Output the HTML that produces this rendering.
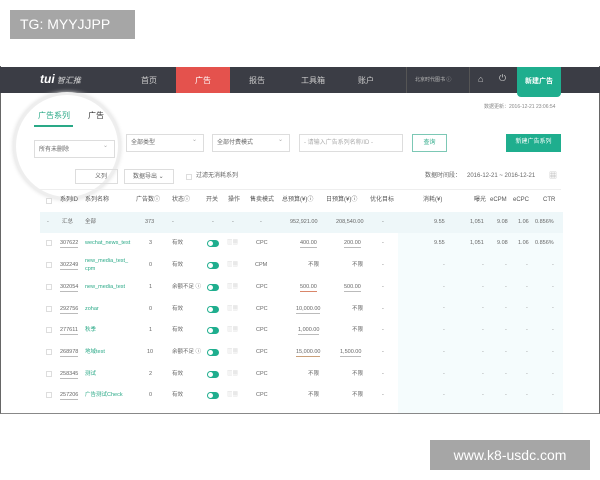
<!DOCTYPE html>
<html><head><meta charset="utf-8"><style>
*{margin:0;padding:0;box-sizing:border-box}
body{width:600px;height:480px;background:#fff;position:relative;overflow:hidden;font-family:"Liberation Sans","Noto Sans CJK SC",sans-serif;color:#555}
.a{position:absolute;white-space:nowrap}
.nav{left:0;top:67px;width:600px;height:26px;background:#3b3d45}
.nt{color:#ccc;font-size:8px;top:76px;line-height:9px}
.sel{border:1px solid #ddd;height:18px;font-size:6px;line-height:7px;color:#666;padding:5px 4px;background:#fff}
.sel:after{content:"⌄";position:absolute;right:6px;top:2px;color:#aaa}
.h{font-size:6px;line-height:7px;color:#555;top:197px}
.r{font-size:5.5px;line-height:7px;color:#666}
.g{color:#2aa987}
.sw{width:12px;height:7px;border-radius:4px;background:#1fae8e}
.sw:after{content:"";position:absolute;left:1px;top:1px;width:5px;height:5px;border-radius:50%;background:#fff}
.cb{width:6px;height:6px;border:1px solid #ddd;background:#fff}
.ul{border-bottom:1px solid #bbb}
.d{font-size:5.5px;color:#888;line-height:21.7px}
</style></head><body>
<div class="a" style="left:10px;top:10px;width:125px;height:29px;background:#a6a6a6;color:#fff;font-size:14px;line-height:16px;padding:6px 0 0 10px">TG: MYYJJPP</div>
<div class="a" style="left:0;top:66px;width:600px;height:348px;border-left:1px solid #666;border-right:1px solid #666;border-bottom:1px solid #888"></div>
<div class="a nav"></div>
<div class="a" style="left:40px;top:72px;color:#fff;font-size:12px;line-height:14px;font-weight:bold;font-style:italic">tui<span style="font-size:8px;font-weight:normal;color:#ddd"> 智汇推</span></div>
<div class="a nt" style="left:141px">首页</div>
<div class="a" style="left:176px;top:67px;width:54px;height:26px;background:#e4524d;color:#fff;font-size:8px;line-height:9px;text-align:center;padding-top:9px">广告</div>
<div class="a nt" style="left:249px">报告</div>
<div class="a nt" style="left:301px">工具箱</div>
<div class="a nt" style="left:358px">账户</div>
<div class="a" style="left:406px;top:67px;width:1px;height:26px;background:#555"></div>
<div class="a" style="left:415px;top:77px;font-size:5px;line-height:6px;color:#bbb">北京时代图书 ⓘ</div>
<div class="a" style="left:469px;top:67px;width:1px;height:26px;background:#555"></div>
<div class="a" style="left:478px;top:74px;color:#ccc;font-size:9px;line-height:10px">⌂</div>
<div class="a" style="left:499px;top:73px;color:#ccc;font-size:9px;line-height:10px">⏻</div>
<div class="a" style="left:517px;top:67px;width:44px;height:30px;background:#1fae8e;border-radius:0 0 4px 4px;color:#fff;font-size:7px;line-height:8px;font-weight:bold;text-align:center;padding-top:11px">新建广告</div>
<div class="a" style="left:484px;top:104px;font-size:5px;line-height:6px;color:#888">数据更新：2016-12-21 23:06:54</div>
<div class="a" style="left:13px;top:92px;width:108px;height:108px;border-radius:50%;border:3px solid #eee;box-shadow:0 0 4px #ddd;background:#fff"></div>
<div class="a g" style="left:38px;top:111px;font-size:8px;line-height:9px">广告系列</div>
<div class="a" style="left:34px;top:125px;width:39px;height:2px;background:#2aa987"></div>
<div class="a" style="left:88px;top:111px;font-size:8px;line-height:9px;color:#333">广告</div>
<div class="a sel" style="left:34px;top:140px;width:81px;padding-top:6px">所有未删除</div>
<div class="a sel" style="left:126px;top:134px;width:78px">全部类型</div>
<div class="a sel" style="left:212px;top:134px;width:78px">全部付费模式</div>
<div class="a" style="left:299px;top:134px;width:104px;height:18px;border:1px solid #ddd;font-size:6px;line-height:7px;color:#aaa;padding:5px 4px">- 请输入广告系列名称/ID -</div>
<div class="a" style="left:412px;top:134px;width:35px;height:18px;border:1px solid #7cc8b5;font-size:6px;line-height:7px;color:#2aa987;text-align:center;padding-top:5px">查询</div>
<div class="a" style="left:506px;top:134px;width:55px;height:18px;background:#1fae8e;font-size:6px;line-height:7px;color:#fff;text-align:center;padding-top:5px">新建广告系列</div>
<div class="a" style="left:75px;top:169px;width:43px;height:15px;border:1px solid #ddd;font-size:6px;line-height:7px;color:#666;padding:4px 0 0 19px">义列</div>
<div class="a" style="left:124px;top:169px;width:50px;height:15px;border:1px solid #ddd;font-size:6px;line-height:7px;color:#666;padding:4px 0 0 8px">数据导出 ⌄</div>
<div class="a cb" style="left:186px;top:174px"></div>
<div class="a" style="left:196px;top:173px;font-size:6px;line-height:7px;color:#666">过滤无消耗系列</div>
<div class="a" style="left:425px;top:173px;font-size:6px;line-height:7px;color:#666">数据时间段：</div>
<div class="a" style="left:467px;top:173px;font-size:6px;line-height:7px;color:#666">2016-12-21 ~ 2016-12-21</div>
<div class="a" style="left:549px;top:171px;font-size:8px;line-height:9px;color:#aaa">▦</div>
<div class="a" style="left:40px;top:189px;width:521px;height:1px;background:#eee"></div>
<div class="a" style="left:398px;top:233px;width:165px;height:180px;background:#f5fcfd"></div>
<div class="a" style="left:40px;top:212px;width:523px;height:21px;background:#eef7f9"></div>
<div class="a cb" style="left:46px;top:198px"></div>
<div class="a h" style="left:60px">系列ID</div><div class="a h" style="left:85px">系列名称</div>
<div class="a h" style="left:136px">广告数ⓘ</div><div class="a h" style="left:172px">状态ⓘ</div>
<div class="a h" style="left:206px">开关</div><div class="a h" style="left:228px">操作</div>
<div class="a h" style="left:250px">售卖模式</div><div class="a h" style="left:282px">总预算(¥)ⓘ</div>
<div class="a h" style="left:326px">日预算(¥)ⓘ</div><div class="a h" style="left:370px">优化目标</div>
<div class="a h" style="left:423px">消耗(¥)</div><div class="a h" style="left:474px">曝光</div>
<div class="a h" style="left:490px">eCPM</div><div class="a h" style="left:513px">eCPC</div><div class="a h" style="left:543px">CTR</div>
<div class="a r" style="left:47px;top:219px">-</div><div class="a r" style="left:62px;top:219px">汇总</div><div class="a r" style="left:85px;top:219px">全部</div>
<div class="a r" style="left:145px;top:219px">373</div><div class="a r" style="left:172px;top:219px">-</div>
<div class="a r" style="left:212px;top:219px">-</div><div class="a r" style="left:232px;top:219px">-</div><div class="a r" style="left:260px;top:219px">-</div>
<div class="a r" style="left:290px;top:219px">952,921.00</div><div class="a r" style="left:336px;top:219px">208,540.00</div><div class="a r" style="left:382px;top:219px">-</div>
<div class="a r" style="left:434px;top:219px">9.55</div><div class="a r" style="left:470px;top:219px">1,051</div><div class="a r" style="left:497px;top:219px">9.08</div><div class="a r" style="left:518px;top:219px">1.06</div><div class="a r" style="left:535px;top:219px">0.856%</div>

<div class="a cb" style="left:46px;top:240px"></div><div class="a r ul" style="left:60px;top:240px">307622</div><div class="a r g" style="left:85px;top:240px">wechat_news_test</div><div class="a r" style="left:149px;top:240px">3</div><div class="a r" style="left:172px;top:240px">有效</div><div class="a sw" style="left:207px;top:240px"></div><div class="a r" style="left:227px;top:240px;color:#ccc">▥▦</div><div class="a r" style="left:256px;top:240px">CPC</div><div class="a r" style="left:300px;top:240px;border-bottom:1px solid #bbb">400.00</div><div class="a r" style="left:344px;top:240px;border-bottom:1px solid #bbb">200.00</div><div class="a r" style="left:382px;top:240px">-</div><div class="a r" style="left:434px;top:240px">9.55</div><div class="a r" style="left:470px;top:240px">1,051</div><div class="a r" style="left:497px;top:240px">9.08</div><div class="a r" style="left:518px;top:240px">1.06</div><div class="a r" style="left:535px;top:240px">0.856%</div>

<div class="a cb" style="left:46px;top:262px"></div><div class="a r ul" style="left:60px;top:262px">302249</div><div class="a r g" style="left:85px;top:257px;line-height:8px">new_media_test_<br>cpm</div><div class="a r" style="left:149px;top:262px">0</div><div class="a r" style="left:172px;top:262px">有效</div><div class="a sw" style="left:207px;top:262px"></div><div class="a r" style="left:227px;top:262px;color:#ccc">▥▦</div><div class="a r" style="left:255px;top:262px">CPM</div><div class="a r" style="left:308px;top:262px">不限</div><div class="a r" style="left:352px;top:262px">不限</div><div class="a r" style="left:382px;top:262px">-</div>

<div class="a cb" style="left:46px;top:284px"></div><div class="a r ul" style="left:60px;top:284px">302054</div><div class="a r g" style="left:85px;top:284px">new_media_test</div><div class="a r" style="left:149px;top:284px">1</div><div class="a r" style="left:172px;top:284px">余额不足 ⓘ</div><div class="a sw" style="left:207px;top:284px"></div><div class="a r" style="left:227px;top:284px;color:#ccc">▥▦</div><div class="a r" style="left:256px;top:284px">CPC</div><div class="a r" style="left:300px;top:284px;border-bottom:1px solid #d9866a">500.00</div><div class="a r" style="left:344px;top:284px;border-bottom:1px solid #bbb">500.00</div><div class="a r" style="left:382px;top:284px">-</div>

<div class="a cb" style="left:46px;top:306px"></div><div class="a r ul" style="left:60px;top:306px">292756</div><div class="a r g" style="left:85px;top:306px">zohar</div><div class="a r" style="left:149px;top:306px">0</div><div class="a r" style="left:172px;top:306px">有效</div><div class="a sw" style="left:207px;top:306px"></div><div class="a r" style="left:227px;top:306px;color:#ccc">▥▦</div><div class="a r" style="left:256px;top:306px">CPC</div><div class="a r" style="left:296px;top:306px;border-bottom:1px solid #bbb">10,000.00</div><div class="a r" style="left:352px;top:306px">不限</div><div class="a r" style="left:382px;top:306px">-</div>

<div class="a cb" style="left:46px;top:327px"></div><div class="a r ul" style="left:60px;top:327px">277611</div><div class="a r g" style="left:85px;top:327px">秋季</div><div class="a r" style="left:149px;top:327px">1</div><div class="a r" style="left:172px;top:327px">有效</div><div class="a sw" style="left:207px;top:327px"></div><div class="a r" style="left:227px;top:327px;color:#ccc">▥▦</div><div class="a r" style="left:256px;top:327px">CPC</div><div class="a r" style="left:298px;top:327px;border-bottom:1px solid #bbb">1,000.00</div><div class="a r" style="left:352px;top:327px">不限</div><div class="a r" style="left:382px;top:327px">-</div>

<div class="a cb" style="left:46px;top:349px"></div><div class="a r ul" style="left:60px;top:349px">268978</div><div class="a r g" style="left:85px;top:349px">地域test</div><div class="a r" style="left:147px;top:349px">10</div><div class="a r" style="left:172px;top:349px">余额不足 ⓘ</div><div class="a sw" style="left:207px;top:349px"></div><div class="a r" style="left:227px;top:349px;color:#ccc">▥▦</div><div class="a r" style="left:256px;top:349px">CPC</div><div class="a r" style="left:296px;top:349px;border-bottom:1px solid #c9a07a">15,000.00</div><div class="a r" style="left:340px;top:349px;border-bottom:1px solid #bbb">1,500.00</div><div class="a r" style="left:382px;top:349px">-</div>

<div class="a cb" style="left:46px;top:371px"></div><div class="a r ul" style="left:60px;top:371px">258345</div><div class="a r g" style="left:85px;top:371px">测试</div><div class="a r" style="left:149px;top:371px">2</div><div class="a r" style="left:172px;top:371px">有效</div><div class="a sw" style="left:207px;top:371px"></div><div class="a r" style="left:227px;top:371px;color:#ccc">▥▦</div><div class="a r" style="left:256px;top:371px">CPC</div><div class="a r" style="left:308px;top:371px">不限</div><div class="a r" style="left:352px;top:371px">不限</div><div class="a r" style="left:382px;top:371px">-</div>

<div class="a cb" style="left:46px;top:392px"></div><div class="a r ul" style="left:60px;top:392px">257206</div><div class="a r g" style="left:85px;top:392px">广告测试Check</div><div class="a r" style="left:149px;top:392px">0</div><div class="a r" style="left:172px;top:392px">有效</div><div class="a sw" style="left:207px;top:392px"></div><div class="a r" style="left:227px;top:392px;color:#ccc">▥▦</div><div class="a r" style="left:256px;top:392px">CPC</div><div class="a r" style="left:308px;top:392px">不限</div><div class="a r" style="left:352px;top:392px">不限</div><div class="a r" style="left:382px;top:392px">-</div>

<div class="a d" style="left:443px;top:255px">-<br>-<br>-<br>-<br>-<br>-<br>-</div>
<div class="a d" style="left:482px;top:255px">-<br>-<br>-<br>-<br>-<br>-<br>-</div>
<div class="a d" style="left:505px;top:255px">-<br>-<br>-<br>-<br>-<br>-<br>-</div>
<div class="a d" style="left:526px;top:255px">-<br>-<br>-<br>-<br>-<br>-<br>-</div>
<div class="a d" style="left:552px;top:255px">-<br>-<br>-<br>-<br>-<br>-<br>-</div>
<div class="a" style="left:430px;top:440px;width:160px;height:30px;background:#a6a6a6;color:#fff;font-size:14px;line-height:16px;text-align:center;padding-top:7px">www.k8-usdc.com</div>
</body></html>
